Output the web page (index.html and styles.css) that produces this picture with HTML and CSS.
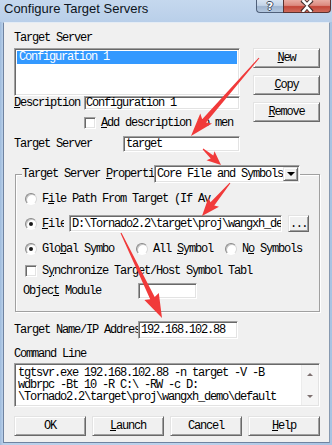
FILE: index.html
```html
<!DOCTYPE html>
<html>
<head>
<meta charset="utf-8">
<link rel="stylesheet" href="styles.css">
</head>
<body>
<div class="window">
  <div class="titlebar">
    <span class="title">Configure Target Servers</span>
    <div class="caption-btns">
      <div class="cap help"><span>?</span></div>
      <div class="cap close">
        <svg width="16" height="12" viewBox="0 0 16 12"><path d="M3 0 L8 4.5 L13 0 M3 12 L8 7 L13 12" stroke="#3a2a2a" stroke-width="4.4" fill="none"/><path d="M3.5 0 L8 4.6 L12.5 0 M3.5 12 L8 7 L12.5 12" stroke="#fff" stroke-width="2.6" fill="none"/></svg>
      </div>
    </div>
  </div>
  <div class="client">
    <div class="top">
      <div class="left">
        <div class="lbl first">Target Server</div>
        <div class="listbox sunken"><div class="sel">Configuration 1</div></div>
        <div class="desc-row">
          <span class="lbl desc-lbl"><u>D</u>escription</span>
          <div class="edit sunken desc">Configuration 1</div>
        </div>
        <div class="check-row">
          <span class="checkbox sunken"></span><span class="lbl"><u>A</u>dd description to men</span>
        </div>
        <div class="ts-row">
          <span class="lbl ts-lbl">Target Server</span>
          <div class="edit sunken ts-edit">target</div>
        </div>
      </div>
      <div class="right">
        <div class="btn"><span><u>N</u>ew</span></div>
        <div class="btn"><span><u>C</u>opy</span></div>
        <div class="btn"><span><u>R</u>emove</span></div>
      </div>
    </div>

    <fieldset class="group">
      <legend class="legend">
        <span class="lbl">Target Server <u>P</u>roperti</span>
        <div class="combo sunken">
          <span class="combo-text">Core File and Symbols</span>
          <span class="drop btn-face"><span class="tri"></span></span>
        </div>
      </legend>
      <div class="frow r1">
        <span class="radio"></span><span class="lbl">F<u>i</u>le Path From Target (If Av</span>
      </div>
      <div class="frow r2">
        <span class="radio on"></span><span class="lbl file-lbl"><u>F</u>ile</span>
        <div class="edit sunken path"><span>D:\Tornado2.2\target\proj\wangxh_de</span></div>
        <div class="btn dots"><span>...</span></div>
      </div>
      <div class="frow r3">
        <div class="ropt"><span class="radio on"></span><span class="lbl">Glo<u>b</u>al Symbo</span></div>
        <div class="ropt"><span class="radio"></span><span class="lbl">All <u>S</u>ymbol</span></div>
        <div class="ropt"><span class="radio"></span><span class="lbl">N<u>o</u> Symbols</span></div>
      </div>
      <div class="frow r4">
        <span class="checkbox sunken"></span><span class="lbl">S<u>y</u>nchronize Target/Host Symbol Tabl</span>
      </div>
      <div class="frow r5">
        <span class="lbl om-lbl">Objec<u>t</u> Module</span>
        <div class="edit sunken om-edit"></div>
      </div>
    </fieldset>

    <div class="tn-row">
      <span class="lbl tn-lbl">Tar<u>g</u>et Name/IP Addres</span>
      <div class="edit sunken tn-edit">192.168.102.88</div>
    </div>

    <div class="lbl cl-lbl">Command Line</div>
    <div class="cmd sunken">
      <div class="cmd-text">
        <div class="cline">tgtsvr.exe 192.168.102.88 -n target -V -B</div>
        <div class="cline">wdbrpc -Bt 10 -R C:\ -RW -c D:</div>
        <div class="cline">\Tornado2.2\target\proj\wangxh_demo\default</div>
      </div>
      <div class="vscroll">
        <span class="arr up"></span>
        <span class="arr down"></span>
      </div>
    </div>

    <div class="bottom-btns">
      <div class="btn"><span>OK</span></div>
      <div class="btn"><span><u>L</u>aunch</span></div>
      <div class="btn"><span>Cancel</span></div>
      <div class="btn"><span><u>H</u>elp</span></div>
    </div>
  </div>

  <svg class="arrows" width="332" height="445" viewBox="0 0 332 445">
    <polygon points="258.6,57.7 202.2,119.3 200.3,113.5 191,136 212.0,123.6 206.0,122.5 259.4,58.3"/>
    <polygon points="202.7,149.4 210.7,158.5 206.5,160.2 221,165 214.5,151.2 213.3,155.5 203.3,148.6"/>
    <polygon points="229.6,182.7 210.5,202.2 208.4,197.8 202,216 219.0,206.8 214.3,205.4 230.4,183.3"/>
    <polygon points="120.5,233.2 150.2,299.3 144.4,299.9 162,318 158.8,292.9 154.7,297.1 121.5,232.8"/>
  </svg>
</div>
</body>
</html>
```

FILE: styles.css
```css
html, body {
  margin: 0;
  padding: 0;
}
body {
  width: 332px;
  height: 445px;
  overflow: hidden;
  font-family: "Liberation Mono", monospace;
  font-size: 12px;
  color: #000;
}
.client, .arrows {
  letter-spacing: -1.2px;
}
u { text-decoration: underline; text-underline-offset: 1px; }

.window {
  position: relative;
  width: 332px;
  height: 445px;
  box-sizing: border-box;
  padding: 0 2px 2px 3px;
  display: flex;
  flex-direction: column;
  background: linear-gradient(90deg, #9fbbdc 0, #b9d0ea 3px, #bcd2eb 60%, #a9c3e2 100%);
}

.titlebar {
  height: 22px;
  display: flex;
  justify-content: space-between;
  align-items: flex-start;
  background: linear-gradient(180deg, #c5d8ee 0%, #b9cfe9 100%);
  margin: 0 -2px 0 -3px;
  padding: 0 0 0 4px;
}
.title {
  font-family: "Liberation Sans", Arial, sans-serif;
  font-size: 13px;
  letter-spacing: normal;
  line-height: 16px;
  margin-top: 1px;
  color: #0c1420;
}
.caption-btns {
  display: flex;
  margin-right: 1px;
}
.cap {
  height: 13px;
  box-sizing: border-box;
  border: 1px solid #4f607a;
  border-top: none;
  display: flex;
  align-items: center;
  justify-content: center;
}
.help {
  width: 27px;
  border-radius: 0 0 0 4px;
  border-right: none;
  background: linear-gradient(180deg, #d7e3f1 0%, #c3d4e8 45%, #9fb5d0 55%, #b4c8df 100%);
}
.help span {
  font-family: "DejaVu Sans", sans-serif;
  font-weight: bold;
  font-size: 11px;
  line-height: 11px;
  color: #fff;
  text-shadow: 1px 0 #3c4a5e, -1px 0 #3c4a5e, 0 1px #3c4a5e, 0 -1px #3c4a5e;
}
.close {
  width: 48px;
  border-radius: 0 0 4px 0;
  border-color: #5a3230;
  background: linear-gradient(180deg, #e9aca3 0%, #dc8a7f 45%, #c34537 55%, #cf6a5a 100%);
}

.client {
  flex: 1;
  background: #f0f0f0;
  border: 1px solid;
  border-color: #e4ecf5 #8799b0 #6f83a0 #6f83a0;
  padding: 0 9px 0 10px;
  display: flex;
  flex-direction: column;
}

.lbl {
  line-height: 12px;
  white-space: nowrap;
}

.sunken {
  box-sizing: border-box;
  border: 1px solid;
  border-color: #a0a0a0 #fff #fff #a0a0a0;
  box-shadow: inset 1px 1px #696969, inset -1px -1px #e3e3e3;
  background: #fff;
}
.btn, .btn-face {
  box-sizing: border-box;
  background: #f0f0f0;
  border: 1px solid;
  border-color: #e3e3e3 #696969 #696969 #e3e3e3;
  box-shadow: inset 1px 1px #fff, inset -1px -1px #a0a0a0;
}
.btn {
  height: 20px;
  display: flex;
  align-items: center;
  justify-content: center;
  line-height: 12px;
}

/* top */
.top {
  display: grid;
  grid-template-columns: 226px 67px;
  column-gap: 13px;
  align-items: start;
}
.left {
  display: flex;
  flex-direction: column;
}
.first {
  margin-top: 9px;
  height: 12px;
}
.listbox {
  margin-top: 4px;
  height: 48px;
  padding: 1px 1px;
}
.sel {
  margin: 1px 1px 0 1px;
  height: 13px;
  line-height: 13px;
  background: #3399ff;
  color: #fff;
  padding-left: 2px;
}
.desc-row {
  display: flex;
  align-items: center;
  height: 14px;
}
.desc-lbl {
  width: 70px;
}
.edit {
  white-space: nowrap;
  overflow: hidden;
  line-height: 12px;
  display: flex;
  align-items: center;
  padding: 0 2px;
}
.desc {
  width: 156px;
  height: 14px;
  padding-left: 1px;
  overflow: visible;
}
.check-row {
  margin-top: 7px;
  margin-left: 70px;
  height: 12px;
  display: flex;
  align-items: center;
  gap: 5px;
}
.checkbox {
  display: inline-block;
  width: 12px;
  height: 12px;
  flex: none;
}
.ts-row {
  margin-top: 7px;
  display: flex;
  align-items: center;
}
.ts-lbl {
  width: 109px;
}
.ts-edit {
  width: 117px;
  height: 16px;
}
.right {
  margin-top: 25px;
  display: flex;
  flex-direction: column;
  gap: 7px;
}

/* group */
.group {
  margin: 13px 0 0 1px;
  padding: 0 0 12px 6px;
  border: 1px solid #a0a0a0;
  box-shadow: inset 1px 1px #fff, 1px 1px #fff;
  min-width: 0;
}
.legend {
  padding: 0;
  margin: 0;
  height: 18px;
  display: flex;
  align-items: center;
  background: #f0f0f0;
}
.combo {
  width: 146px;
  height: 18px;
  display: flex;
  align-items: center;
  padding-left: 2px;
}
.combo-text {
  line-height: 12px;
  white-space: nowrap;
}
.drop {
  margin-left: auto;
  margin-right: 1px;
  width: 16px;
  height: 14px;
  display: flex;
  align-items: center;
  justify-content: center;
}
.tri {
  width: 0;
  height: 0;
  border-left: 4px solid transparent;
  border-right: 4px solid transparent;
  border-top: 4px solid #000;
}

.frow {
  display: flex;
  align-items: center;
  padding-left: 3px;
}
.radio {
  flex: none;
  width: 12px;
  height: 12px;
  box-sizing: border-box;
  border-radius: 50%;
  border: 1px solid;
  border-color: #8a8a8a #d8d8d8 #fff #8a8a8a;
  background: radial-gradient(circle at 60% 60%, #fff 0, #fff 50%, #ececec 100%);
  box-shadow: inset 1px 1px #c4c4c4;
  margin-right: 5px;
  position: relative;
}
.radio.on::after {
  content: "";
  position: absolute;
  left: 3px;
  top: 3px;
  width: 4px;
  height: 4px;
  border-radius: 50%;
  background: #1a1a1a;
}
.r1 {
  margin-top: 10px;
  height: 12px;
}
.r2 {
  margin-top: 10px;
  height: 17px;
}
.file-lbl {
  width: 22px;
  overflow: hidden;
  margin-right: 5px;
}
.path {
  width: 213px;
  height: 17px;
}
.dots {
  margin-left: 6px;
  width: 21px;
  height: 17px;
  letter-spacing: -1.5px;
}
.r3 {
  margin-top: 11px;
  height: 12px;
  display: grid;
  grid-template-columns: 111px 89px 1fr;
}
.ropt {
  display: flex;
  align-items: center;
  overflow: hidden;
}
.r4 {
  margin-top: 10px;
  height: 12px;
  gap: 5px;
}
.r5 {
  margin-top: 6px;
  height: 16px;
  padding-left: 1px;
}
.om-lbl {
  width: 115px;
}
.om-edit {
  width: 59px;
  height: 16px;
}

.tn-row {
  margin-top: 9px;
  display: flex;
  align-items: center;
  height: 18px;
}
.tn-lbl {
  width: 124px;
}
.tn-edit {
  width: 100px;
  height: 18px;
}
.cl-lbl {
  margin-top: 9px;
  height: 12px;
}
.cmd {
  margin-top: 3px;
  height: 44px;
  display: flex;
  padding: 1px;
}
.cmd-text {
  flex: 1;
  padding: 2px 0 0 2px;
  white-space: nowrap;
  overflow: hidden;
}
.cline {
  height: 12px;
  line-height: 12px;
}
.vscroll {
  width: 17px;
  background: #f5f5f5;
  border-left: 1px solid #ececec;
  display: flex;
  flex-direction: column;
  align-items: center;
  justify-content: space-between;
  padding: 8px 0 7px;
  box-sizing: border-box;
}
.arr {
  width: 0;
  height: 0;
  border-left: 3px solid transparent;
  border-right: 3px solid transparent;
}
.arr.up {
  border-bottom: 3px solid #7d7070;
}
.arr.down {
  border-top: 3px solid #7d7070;
}

.bottom-btns {
  margin-top: 9px;
  display: grid;
  grid-template-columns: repeat(4, 72px);
  column-gap: 6px;
}

.arrows {
  position: absolute;
  left: 0;
  top: 0;
  pointer-events: none;
}
.arrows polygon {
  fill: #f13a3a;
}
```
